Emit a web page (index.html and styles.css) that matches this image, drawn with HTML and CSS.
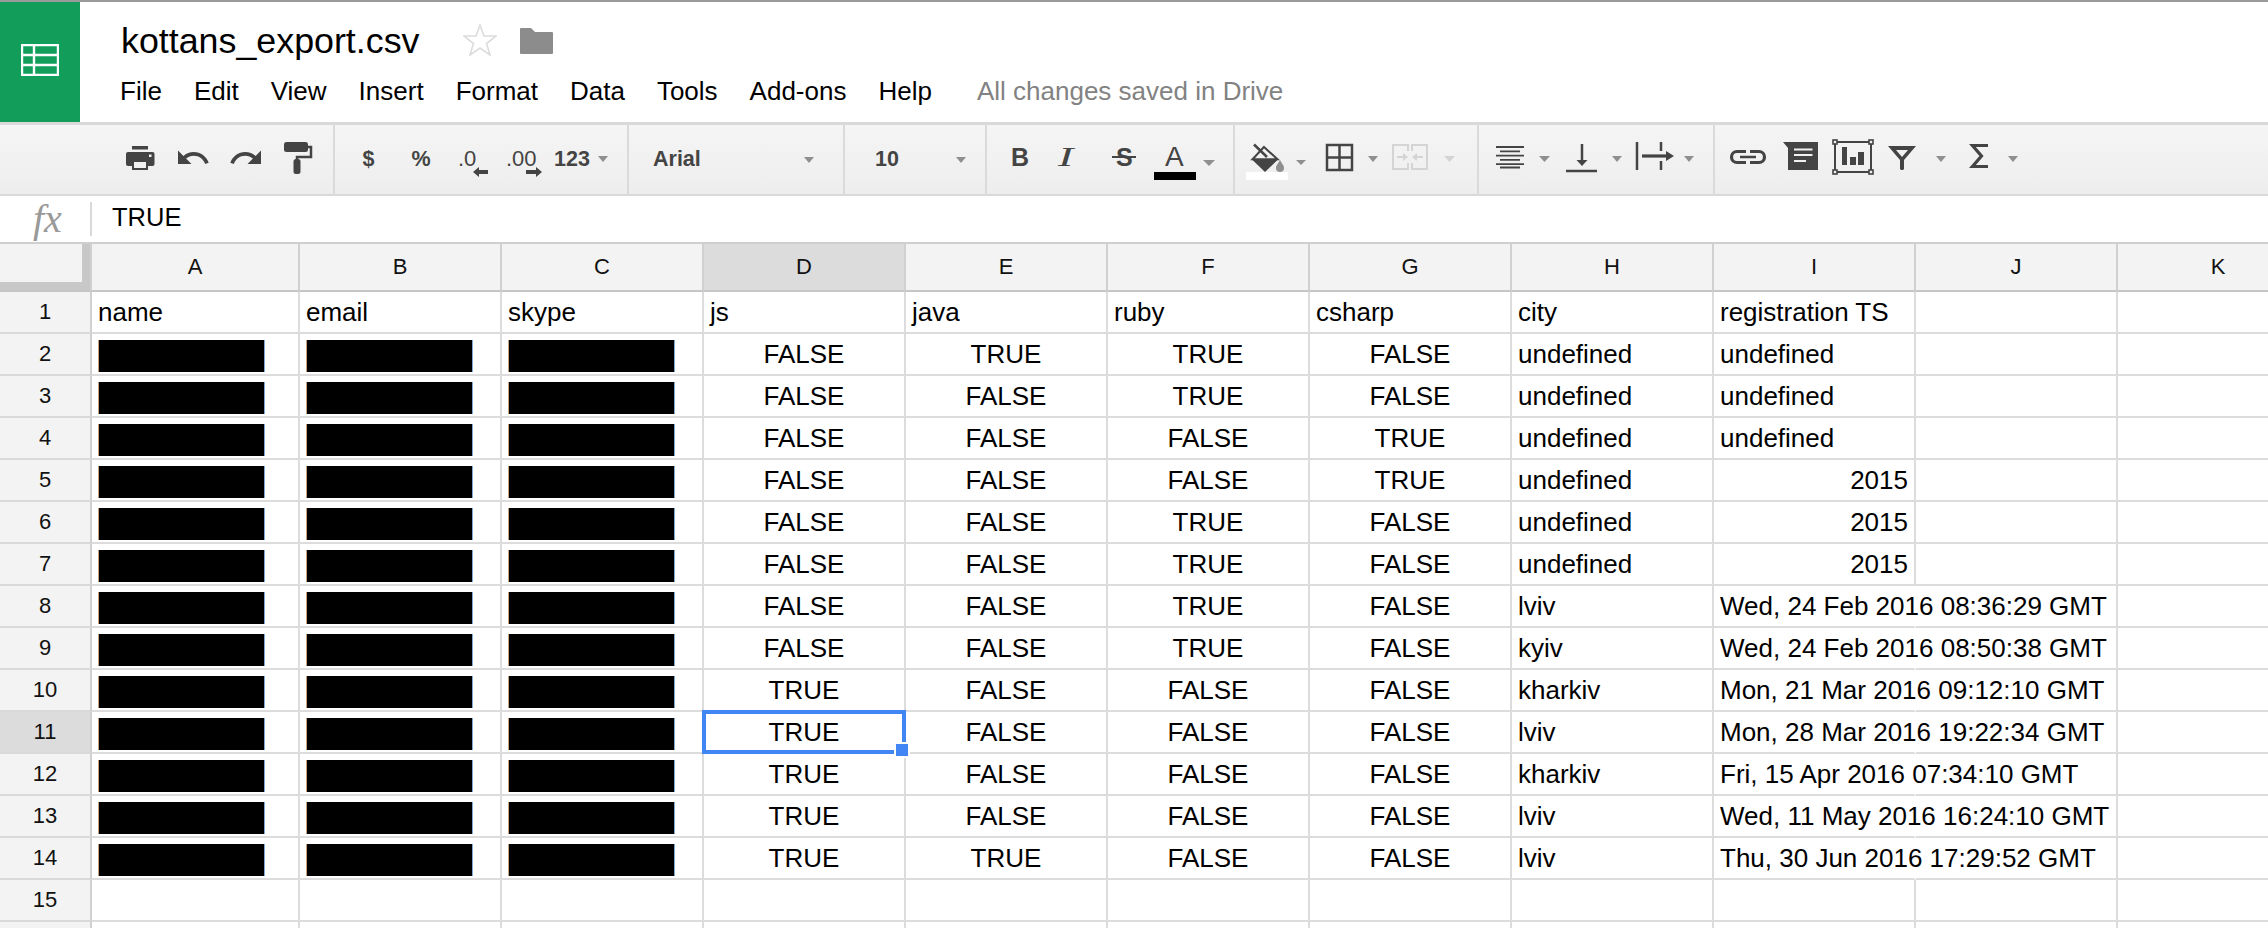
FILE: index.html
```html
<!DOCTYPE html>
<html lang="en">
<head>
<meta charset="utf-8">
<title>kottans_export.csv</title>
<link rel="stylesheet" href="styles.css">
</head>
<body>
<header class="appbar">
  <div class="logo">
    <svg width="38" height="32" viewBox="0 0 38 32"><path class="logo-grid" d="M1 1H37V31H1ZM1 11H37M1 21H37M13 1V31"/></svg>
  </div>
  <div class="titles">
    <div class="title-row">
      <h1 class="doc-title">kottans_export.csv</h1>
      <svg class="star" width="34" height="32" viewBox="0 0 34 32"><polygon points="17,1 21,12 33,12 23.5,19.5 27,31 17,24 7,31 10.5,19.5 1,12 13,12"/></svg>
      <svg class="folder" width="33" height="26" viewBox="0 0 33 26"><path d="M0 1a1 1 0 0 1 1-1h10l4 4h17a1 1 0 0 1 1 1v20a1 1 0 0 1-1 1H1a1 1 0 0 1-1-1Z"/></svg>
    </div>
    <nav class="menu">
      <span>File</span><span>Edit</span><span>View</span><span>Insert</span><span>Format</span><span>Data</span><span>Tools</span><span>Add-ons</span><span>Help</span>
      <span class="saved">All changes saved in Drive</span>
    </nav>
  </div>
</header>

<div class="toolbar">
  <div class="group g1">
    <svg width="52" height="69" viewBox="120 125 52 69"><rect class="i" x="132" y="146" width="16" height="3.5"/><rect class="i" x="126" y="152" width="28.5" height="14" rx="2"/><rect class="i" x="132" y="160" width="16" height="10"/><rect class="h" x="134" y="162" width="12" height="6"/><rect class="h" x="149" y="154.5" width="2.5" height="2.5"/></svg>
    <svg width="50" height="69" viewBox="172 125 50 69"><path class="i" transform="translate(175 140) scale(1.5)" d="M12.5 8c-2.65 0-5.05.99-6.9 2.6L2 7v9h9l-3.62-3.62c1.39-1.16 3.16-1.88 5.12-1.88 3.54 0 6.55 2.31 7.6 5.5l2.37-.78C21.08 11.03 17.15 8 12.5 8z"/></svg>
    <svg width="54" height="69" viewBox="222 125 54 69"><path class="i" transform="translate(228 140) scale(1.5)" d="M18.4 10.6C16.55 8.99 14.15 8 11.5 8c-4.65 0-8.58 3.03-9.96 7.22L3.9 16c1.05-3.19 4.05-5.5 7.6-5.5 1.95 0 3.73.72 5.12 1.88L13 16h9V7l-3.6 3.6z"/></svg>
    <svg width="57" height="69" viewBox="276 125 57 69"><rect class="i" x="284" y="142" width="24" height="10" rx="2.5"/><path class="s" d="M308 147H311V157H297V160"/><rect class="i" x="293.5" y="159" width="7" height="15" rx="2.5"/></svg>
  </div>
  <div class="group g2">
    <span class="tb-text b-dollar">$</span>
    <span class="tb-text b-percent">%</span>
    <svg width="55" height="69" viewBox="440 125 55 69"><text class="tb-thin" x="458" y="166">.0</text><polygon class="i" points="473,172 479,167 479,170 488,170 488,174 479,174 479,177"/></svg>
    <svg width="53" height="69" viewBox="495 125 53 69"><text class="tb-thin" x="506" y="166">.00</text><polygon class="i" points="542,172 536,167 536,170 526,170 526,174 536,174 536,177"/></svg>
    <span class="tb-text b-123">123<i class="caret"></i></span>
  </div>
  <div class="group g3"><span class="tb-text">Arial</span><i class="caret"></i></div>
  <div class="group g4"><span class="tb-text">10</span><i class="caret"></i></div>
  <div class="group g5">
    <svg width="58" height="69" viewBox="987 125 58 69"><text class="glyph-b" x="1011" y="166">B</text></svg>
    <svg width="50" height="69" viewBox="1045 125 50 69"><text class="glyph-i" transform="translate(1058 166) scale(1.7 1)">I</text></svg>
    <svg width="55" height="69" viewBox="1095 125 55 69"><text class="glyph-b" x="1116" y="166">S</text><rect class="i" x="1112" y="156" width="24" height="2"/></svg>
    <svg width="83" height="69" viewBox="1150 125 83 69"><text class="glyph-a" x="1165" y="166">A</text><rect class="black" x="1154" y="172" width="42" height="8"/><polygon class="c" points="1203,160 1215,160 1209,166"/></svg>
  </div>
  <div class="group g6">
    <svg width="77" height="69" viewBox="1235 125 77 69"><path class="s" d="M1254 144.5L1267 157"/><path class="s2" d="M1264 147L1277.5 159.3H1252.5Z"/><path class="i" d="M1251.7 159.3H1278.3L1265 172Z"/><path class="d" d="M1280 160C1282 164 1284 165 1284 168A4 4 0 0 1 1276 168C1276 165 1278 164 1280 160Z"/><rect class="white" x="1246" y="172" width="42" height="8"/><polygon class="c" points="1296,160 1306,160 1301,165"/></svg>
    <svg width="74" height="69" viewBox="1312 125 74 69"><path class="s" d="M1327 145H1352V170H1327ZM1339.5 145V170M1327 157.5H1352"/><polygon class="c" points="1368,156 1378,156 1373,162"/></svg>
    <svg width="90" height="69" viewBox="1386 125 90 69"><path class="s-off" d="M1408 151V145H1393V169H1408V163M1412 151V145H1427V169H1412V163M1397 157H1405M1423 157H1415"/><path class="off" d="M1403 153L1408 157L1403 161ZM1417 153L1412 157L1417 161Z"/><polygon class="c-off" points="1444,156 1455,156 1449.5,162"/></svg>
  </div>
  <div class="group g7">
    <svg width="79" height="69" viewBox="1479 125 79 69"><path class="s-thin" d="M1496 147H1524M1500 151.3H1520M1496 155.6H1524M1500 159.9H1520M1496 164.2H1524M1500 167.5H1520"/><polygon class="c" points="1539,156 1550,156 1544.5,162"/></svg>
    <svg width="72" height="69" viewBox="1558 125 72 69"><path class="s" d="M1582 144V161M1566 171H1597"/><polygon class="i" points="1576.5,160 1587.5,160 1582,166"/><polygon class="c" points="1612,156 1622,156 1617,162"/></svg>
    <svg width="83" height="69" viewBox="1630 125 83 69"><path class="s" d="M1637 142V170M1661 142V151M1661 161V170"/><path class="s3" d="M1642 156H1668"/><polygon class="i" points="1666,151 1674,156 1666,161"/><polygon class="c" points="1684,156 1694,156 1689,162"/></svg>
  </div>
  <div class="group g8">
    <svg width="60" height="69" viewBox="1715 125 60 69"><path class="s3" d="M1746 151.5H1737A5.5 5.5 0 0 0 1737 162.5H1746M1750 151.5H1759A5.5 5.5 0 0 1 1759 162.5H1750"/><path class="s" d="M1740 157H1756"/></svg>
    <svg width="51" height="69" viewBox="1775 125 51 69"><polygon class="i" points="1783,142 1818,142 1818,170 1788,170 1788,148"/><path class="w" d="M1794 149.5H1812.5M1794 155H1812.5M1794 161H1806"/></svg>
    <svg width="54" height="69" viewBox="1826 125 54 69"><rect class="frame" x="1835" y="142" width="36" height="30"/><rect class="corner" x="1833" y="140" width="4" height="4"/><rect class="corner" x="1869" y="140" width="4" height="4"/><rect class="corner" x="1833" y="170" width="4" height="4"/><rect class="corner" x="1869" y="170" width="4" height="4"/><rect class="i" x="1842" y="147" width="5" height="18"/><rect class="i" x="1850" y="157" width="6" height="8"/><rect class="i" x="1858" y="152" width="6" height="13"/></svg>
    <svg width="80" height="69" viewBox="1880 125 80 69"><polygon class="i" points="1888,146 1916,146 1904,160 1904,169 1903,170 1901,170 1900,169 1900,160"/><polygon class="h" points="1896,150 1908,150 1902,157"/><polygon class="c" points="1936,156 1946,156 1941,162"/></svg>
    <svg width="70" height="69" viewBox="1960 125 70 69"><path class="s3" d="M1988 145.5H1972.5L1981.5 156L1972.5 166.5H1988"/><polygon class="c" points="2008,156 2018,156 2013,162"/></svg>
  </div>
</div>

<div class="formula">
  <span class="fx">fx</span>
  <span class="fx-sep"></span>
  <span class="fx-value">TRUE</span>
</div>

<table class="sheet">
  <colgroup><col class="c-row"><col class="c-a"><col class="c-n"><col class="c-n"><col class="c-n"><col class="c-n"><col class="c-n"><col class="c-n"><col class="c-n"><col class="c-n"><col class="c-n"><col class="c-n"></colgroup>
  <thead>
    <tr><th class="corner-cell"></th><th>A</th><th>B</th><th>C</th><th class="active">D</th><th>E</th><th>F</th><th>G</th><th>H</th><th>I</th><th>J</th><th>K</th></tr>
  </thead>
  <tbody>
    <tr><th>1</th><td>name</td><td>email</td><td>skype</td><td>js</td><td>java</td><td>ruby</td><td>csharp</td><td>city</td><td>registration TS</td><td></td><td></td></tr>
    <tr><th>2</th><td><i class="redact"></i></td><td><i class="redact"></i></td><td><i class="redact"></i></td><td class="m">FALSE</td><td class="m">TRUE</td><td class="m">TRUE</td><td class="m">FALSE</td><td>undefined</td><td>undefined</td><td></td><td></td></tr>
    <tr><th>3</th><td><i class="redact"></i></td><td><i class="redact"></i></td><td><i class="redact"></i></td><td class="m">FALSE</td><td class="m">FALSE</td><td class="m">TRUE</td><td class="m">FALSE</td><td>undefined</td><td>undefined</td><td></td><td></td></tr>
    <tr><th>4</th><td><i class="redact"></i></td><td><i class="redact"></i></td><td><i class="redact"></i></td><td class="m">FALSE</td><td class="m">FALSE</td><td class="m">FALSE</td><td class="m">TRUE</td><td>undefined</td><td>undefined</td><td></td><td></td></tr>
    <tr><th>5</th><td><i class="redact"></i></td><td><i class="redact"></i></td><td><i class="redact"></i></td><td class="m">FALSE</td><td class="m">FALSE</td><td class="m">FALSE</td><td class="m">TRUE</td><td>undefined</td><td class="r">2015</td><td></td><td></td></tr>
    <tr><th>6</th><td><i class="redact"></i></td><td><i class="redact"></i></td><td><i class="redact"></i></td><td class="m">FALSE</td><td class="m">FALSE</td><td class="m">TRUE</td><td class="m">FALSE</td><td>undefined</td><td class="r">2015</td><td></td><td></td></tr>
    <tr><th>7</th><td><i class="redact"></i></td><td><i class="redact"></i></td><td><i class="redact"></i></td><td class="m">FALSE</td><td class="m">FALSE</td><td class="m">TRUE</td><td class="m">FALSE</td><td>undefined</td><td class="r">2015</td><td></td><td></td></tr>
    <tr><th>8</th><td><i class="redact"></i></td><td><i class="redact"></i></td><td><i class="redact"></i></td><td class="m">FALSE</td><td class="m">FALSE</td><td class="m">TRUE</td><td class="m">FALSE</td><td>lviv</td><td class="spill">Wed, 24 Feb 2016 08:36:29 GMT</td><td></td><td></td></tr>
    <tr><th>9</th><td><i class="redact"></i></td><td><i class="redact"></i></td><td><i class="redact"></i></td><td class="m">FALSE</td><td class="m">FALSE</td><td class="m">TRUE</td><td class="m">FALSE</td><td>kyiv</td><td class="spill">Wed, 24 Feb 2016 08:50:38 GMT</td><td></td><td></td></tr>
    <tr><th>10</th><td><i class="redact"></i></td><td><i class="redact"></i></td><td><i class="redact"></i></td><td class="m">TRUE</td><td class="m">FALSE</td><td class="m">FALSE</td><td class="m">FALSE</td><td>kharkiv</td><td class="spill">Mon, 21 Mar 2016 09:12:10 GMT</td><td></td><td></td></tr>
    <tr><th class="active">11</th><td><i class="redact"></i></td><td><i class="redact"></i></td><td><i class="redact"></i></td><td class="m selected">TRUE<span class="selection"><span class="handle"></span></span></td><td class="m">FALSE</td><td class="m">FALSE</td><td class="m">FALSE</td><td>lviv</td><td class="spill">Mon, 28 Mar 2016 19:22:34 GMT</td><td></td><td></td></tr>
    <tr><th>12</th><td><i class="redact"></i></td><td><i class="redact"></i></td><td><i class="redact"></i></td><td class="m">TRUE</td><td class="m">FALSE</td><td class="m">FALSE</td><td class="m">FALSE</td><td>kharkiv</td><td class="spill">Fri, 15 Apr 2016 07:34:10 GMT</td><td></td><td></td></tr>
    <tr><th>13</th><td><i class="redact"></i></td><td><i class="redact"></i></td><td><i class="redact"></i></td><td class="m">TRUE</td><td class="m">FALSE</td><td class="m">FALSE</td><td class="m">FALSE</td><td>lviv</td><td class="spill">Wed, 11 May 2016 16:24:10 GMT</td><td></td><td></td></tr>
    <tr><th>14</th><td><i class="redact"></i></td><td><i class="redact"></i></td><td><i class="redact"></i></td><td class="m">TRUE</td><td class="m">TRUE</td><td class="m">FALSE</td><td class="m">FALSE</td><td>lviv</td><td class="spill">Thu, 30 Jun 2016 17:29:52 GMT</td><td></td><td></td></tr>
    <tr><th>15</th><td></td><td></td><td></td><td></td><td></td><td></td><td></td><td></td><td></td><td></td><td></td></tr>
    <tr><th></th><td></td><td></td><td></td><td></td><td></td><td></td><td></td><td></td><td></td><td></td><td></td></tr>
  </tbody>
</table>
</body>
</html>
```

FILE: styles.css
```css
* { box-sizing: border-box; }
html, body { margin: 0; padding: 0; height: 928px; overflow: hidden; background: #fff; }
body { width: 2268px; font-family: "Liberation Sans", Arial, sans-serif; color: #000; }

.appbar { display: flex; height: 125px; border-top: 2px solid #9a9a9a; border-bottom: 3px solid #d9d9d9; }
.logo { width: 80px; background: #129e5a; display: flex; align-items: center; justify-content: center; padding-bottom: 4px; }
.logo-grid { fill: none; stroke: #fff; stroke-width: 2.4; }
.titles { padding-left: 40px; display: flex; flex-direction: column; }
.title-row { display: flex; align-items: flex-start; height: 60px; }
.doc-title { margin: 18px 0 0 1px; font-size: 35.8px; font-weight: 400; line-height: 42px; }
.star { margin: 22px 0 0 44px; }
.star polygon { fill: none; stroke: #dcdcdc; stroke-width: 1.6; }
.folder { margin: 26px 0 0 23px; }
.folder path { fill: #8c8c8c; }
.menu { display: flex; gap: 32px; font-size: 26px; line-height: 30px; margin-top: 14px; }
.saved { color: #828282; margin-left: 13px; }

.toolbar { display: flex; height: 71px; border-bottom: 2px solid #d9d9d9; background: linear-gradient(#f5f5f5, #ededed); }
.group { display: flex; align-items: center; height: 69px; border-right: 2px solid #dadada; flex: none; }
.group svg { flex: none; display: block; }
.g1 { width: 335px; padding-left: 120px; }
.g2 { width: 294px; }
.g3 { width: 216px; padding: 0 29px 0 24px; justify-content: space-between; }
.g4 { width: 142px; padding: 0 19px 0 30px; justify-content: space-between; }
.g5 { width: 248px; }
.g6 { width: 244px; }
.g7 { width: 236px; }
.g8 { border-right: 0; flex: 1; }

.tb-text { font-size: 21.5px; font-weight: 700; color: #444; line-height: 24px; display: flex; align-items: center; margin-top: -2px; }
.b-dollar { width: 67px; justify-content: center; }
.b-percent { width: 38px; justify-content: center; }
.b-123 { width: 79px; padding-left: 6px; gap: 8px; }
.caret { display: block; width: 0; height: 0; border-left: 5.5px solid transparent; border-right: 5.5px solid transparent; border-top: 6px solid #8f8f8f; }

.i { fill: #444; }
.h { fill: #f1f1f1; }
.d { fill: #8f8f8f; }
.c { fill: #8f8f8f; }
.c-off { fill: #d4d4d4; }
.off { fill: #d4d4d4; }
.white { fill: #fff; }
.black { fill: #000; }
.s { fill: none; stroke: #444; stroke-width: 2.5; }
.s2 { fill: none; stroke: #444; stroke-width: 2; }
.s3 { fill: none; stroke: #444; stroke-width: 3.2; }
.s-thin { fill: none; stroke: #444; stroke-width: 1.8; }
.s-off { fill: none; stroke: #d4d4d4; stroke-width: 2; }
.w { fill: none; stroke: #f1f1f1; stroke-width: 2.2; }
.frame { fill: none; stroke: #444; stroke-width: 2; }
.corner { fill: #f1f1f1; stroke: #444; stroke-width: 1.6; }
.tb-thin { font-size: 22px; fill: #444; }
.glyph-b { font-size: 25px; font-weight: 700; fill: #444; }
.glyph-i { font: italic 400 27px "Liberation Serif", serif; fill: #444; }
.glyph-a { font-size: 28px; fill: #444; }

.formula { display: flex; align-items: center; height: 46px; }
.fx { width: 90px; padding-left: 33px; font: italic 40px/46px "Liberation Serif", serif; color: #999; }
.fx-sep { width: 2px; height: 34px; background: #d9d9d9; }
.fx-value { margin-left: 20px; font-size: 25.5px; line-height: 30px; margin-top: -5px; }

.sheet { border-collapse: separate; border-spacing: 0; table-layout: fixed; width: 2320px; border-top: 2px solid #cfcfcf; }
.c-row { width: 92px; }
.c-a { width: 208px; }
.c-n { width: 202px; }
.sheet th { font-size: 22px; font-weight: 400; color: #111; background: #f3f3f3; padding: 0; text-align: center; border-right: 2px solid #d0d0d0; border-bottom: 2px solid #d9d9d9; }
.sheet thead th { height: 48px; border-bottom-color: #c6c6c6; }
.sheet tbody tr { height: 42px; }
.sheet th.active { background: #dcdcdc; }
.corner-cell { box-shadow: inset -8px -8px 0 #c8c8c8; }
.sheet td { font-size: 26px; line-height: 40px; padding: 0 6px; white-space: nowrap; border-right: 2px solid #dcdcdc; border-bottom: 2px solid #dcdcdc; overflow: visible; }
.sheet td.m { text-align: center; }
.sheet td.r { text-align: right; }
.sheet td.spill { border-right-color: transparent; }
.redact { display: block; width: 167px; height: 32px; margin-top: 4px; background: #000; border-left: 1px solid #c9a27a; border-right: 1px solid #7fa9d0; }
.selected { position: relative; }
.selection { position: absolute; left: -2px; top: -2px; right: -2px; bottom: -2px; border: 4px solid #4285f4; }
.handle { position: absolute; right: -8px; bottom: -8px; width: 16px; height: 16px; background: #4285f4; border: 2px solid #fff; }
```
